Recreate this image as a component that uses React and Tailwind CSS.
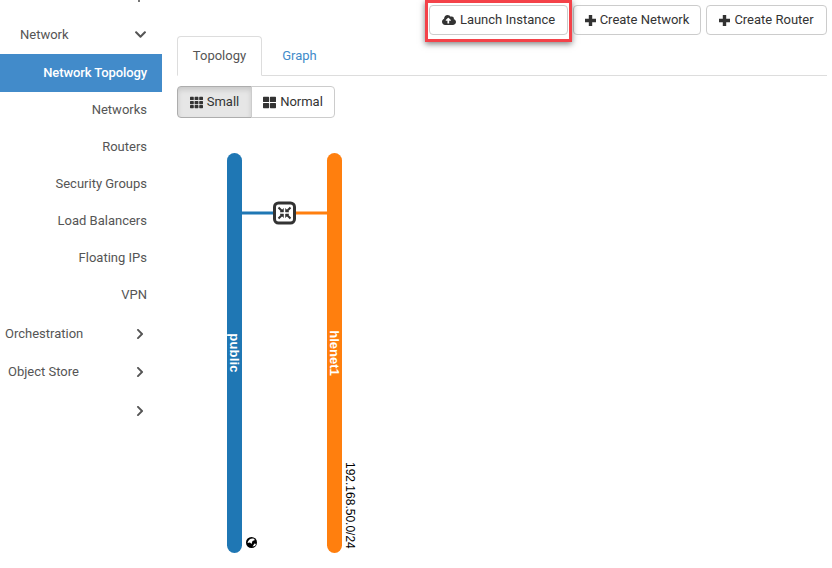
import React from "react";
import { FaChevronDown, FaChevronRight, FaCloudUploadAlt, FaTh, FaThLarge } from "react-icons/fa";

function Plus() {
  return (
    <svg width="11" height="11" viewBox="0 0 11 11" className="shrink-0">
      <path d="M3.800 0h3.400v3.800H11v3.400H7.200V11H3.800V7.200H0V3.800h3.800z" fill="#333" />
    </svg>
  );
}

function SubItem({ label, active, h = "h-[37px]" }) {
  return (
    <div className={active ? "h-[38px] flex items-center justify-end pr-[15px] bg-[#428bca] text-white font-medium tracking-[-0.1px]" : `${h} flex items-center justify-end pr-[15px] text-[#555]`}>
      {label}
    </div>
  );
}

function Group({ label, pl, h, open }) {
  const Icon = open ? FaChevronDown : FaChevronRight;
  return (
    <div className={`flex items-center justify-between text-[#555] ${open ? "pr-[15px]" : "pr-[16px]"} ${h} ${pl}`}>
      <span>{label}</span>
      <Icon size={open ? 13 : 12} className="text-[#555]" />
    </div>
  );
}

function Btn({ children, w }) {
  return (
    <div className={`h-[30px] flex items-center justify-center gap-[4px] bg-white border border-[#ccc] rounded-[4px] text-[#333] ${w}`}>
      {children}
    </div>
  );
}

function Topology() {
  return (
    <svg width="190" height="420" viewBox="0 0 190 420" className="block">
      <rect x="0" y="10" width="15" height="400" rx="7.5" fill="#1f77b4" />
      <rect x="100" y="10" width="15" height="400" rx="7.5" fill="#ff7f0e" />
      <line x1="15" x2="50" y1="70" y2="70" stroke="#1f77b4" strokeWidth="3" />
      <line x1="65" x2="100" y1="70" y2="70" stroke="#ff7f0e" strokeWidth="3" />
      <rect x="47.500" y="60" width="20" height="20" rx="4" fill="#fff" stroke="#333" strokeWidth="3" />
      <g stroke="#333" fill="#333">
        <path d="M51.500 64.500l3.500 3.500M63.500 64.500l-3.500 3.500M51.500 75.500l3.500-3.500M63.500 75.500l-3.500-3.500" strokeWidth="2" />
        <path d="M56.500 69v-3.500l-3.500 3.500zM58.500 69v-3.500l3.500 3.500zM56.500 71v3.500l-3.500-3.500zM58.500 71v3.500l3.500-3.500z" strokeWidth="0.500" />
      </g>
      <text transform="translate(2.500 210) rotate(90)" textAnchor="middle" fill="#fff" fontSize="13" fontWeight="700" fontFamily="'Liberation Sans', sans-serif" letterSpacing="0.200">public</text>
      <text transform="translate(102.500 210) rotate(90)" textAnchor="middle" fill="#fff" fontSize="13" fontWeight="700" fontFamily="'Liberation Sans', sans-serif">hlenet1</text>
      <text transform="translate(119 319) rotate(90)" fill="#000" fontSize="12" fontFamily="'Liberation Sans', sans-serif">192.168.50.0/24</text>
      <circle cx="24.500" cy="399.500" r="5.500" fill="#000" />
      <path d="M20.500 400c.5-3 3-5 6-4.500l1.500 1.500-2.500 1-1 3-1.500-1.500zM25.500 403.500l2-3 1.500.5-1 2z" fill="#fff" />
    </svg>
  );
}

export default function App() {
  return (
    <div className="relative w-[832px] h-[568px] overflow-hidden bg-white flex text-[13px] font-['Roboto',sans-serif]">
      <aside className="relative w-[162px] shrink-0 pt-[15px]">
        <div className="absolute left-[138px] top-0 w-[2px] h-[2px] bg-[#777]" />
        <Group label="Network" h="h-[39px]" pl="pl-[20px]" open />
        <SubItem label="Network Topology" active />
        <SubItem label="Networks" h="h-[36px]" />
        <SubItem label="Routers" />
        <SubItem label="Security Groups" />
        <SubItem label="Load Balancers" />
        <SubItem label="Floating IPs" />
        <SubItem label="VPN" />
        <Group label="Orchestration" h="h-[41px]" pl="pl-[5px]" />
        <Group label="Object Store" h="h-[36px]" pl="pl-[8px]" />
        <Group label="" h="h-[42px]" pl="pl-[5px]" />
      </aside>
      <main className="w-[670px] pl-[15px] pr-[5px] pt-[5px]">
        <div className="flex justify-end gap-[5px] h-[30px]">
          <Btn w="w-[139px]"><FaCloudUploadAlt size={14} color="#333" />Launch Instance</Btn>
          <Btn w="w-[128px]"><Plus />Create Network</Btn>
          <Btn w="w-[121px]"><Plus />Create Router</Btn>
        </div>
        <div className="mt-[1px] h-[40px] flex border-b border-[#ddd]">
          <div className="w-[85px] h-[40px] flex items-center justify-center bg-white border border-[#ddd] border-b-white rounded-t-[4px] text-[#555]">Topology</div>
          <div className="w-[75px] h-[39px] flex items-center justify-center text-[#428bca]">Graph</div>
        </div>
        <div className="mt-[10px] flex h-[32px]">
          <div className="w-[75px] flex items-center justify-center gap-[4px] bg-[#e6e6e6] border border-[#adadad] rounded-l-[4px] text-[#333] shadow-[inset_0_3px_5px_rgba(0,0,0,0.125)]"><FaTh size={13} color="#333" />Small</div>
          <div className="w-[84px] -ml-px flex items-center justify-center gap-[4px] bg-white border border-[#ccc] rounded-r-[4px] text-[#333]"><FaThLarge size={13} color="#333" />Normal</div>
        </div>
        <div className="mt-[25px] ml-[50px]">
          <Topology />
        </div>
      </main>
      <div className="absolute left-[425px] top-0 w-[147px] h-[42px] border-[3px] border-[#f44249] shadow-[0_2px_6px_rgba(0,0,0,0.5)] pointer-events-none" />
    </div>
  );
}
